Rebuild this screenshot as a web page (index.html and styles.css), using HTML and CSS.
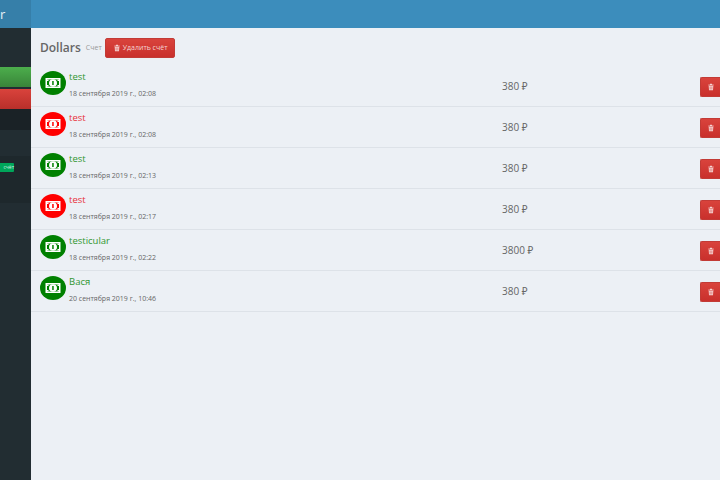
FILE: index.html
```html
<!DOCTYPE html>
<html lang="ru">
<head>
  <meta charset="UTF-8" />
  <title>Dollars</title>
  <link rel="stylesheet" href="styles.css">
</head>
<body>

  <svg class="svg-defs" width="0" height="0">
    <symbol id="bill" viewBox="0 0 26 24">
      <path fill="#fff" fill-rule="evenodd" d="M5.500 7h15v10h-15z M7 8.500v7h12v-7z"/>
      <ellipse fill="#fff" cx="13" cy="12" rx="4" ry="3.800"/>
      <path class="bill-digit" d="M12.200 10h1.500v4h-1.500z"/>
      <path fill="#fff" d="M7 8.500h1.500v1.500h-1.500z M17.500 8.500h1.500v1.500h-1.500z M7 14h1.500v1.500h-1.500z M17.500 14h1.500v1.500h-1.500z"/>
    </symbol>
    <symbol id="trash" viewBox="0 0 12 12">
      <path fill="currentColor" fill-rule="evenodd" d="M1.500 2.500h2.500l.7-1.200h2.600l.7 1.200h2.500v1h-9z M2.500 4.200h7l-.5 6.500h-6z M4.200 5.200v4.500h.8v-4.500z M7 5.200v4.500h.8v-4.500z"/>
    </symbol>
  </svg>

  <div class="layout">
    <aside class="sidebar">
      <div class="logo">r</div>
      <div class="side-group">
        <div class="side-btn side-btn-green"></div>
        <div class="side-btn side-btn-red"></div>
        <div class="side-dark"></div>
        <div class="side-item"></div>
        <div class="side-item side-item-active"><span class="side-badge">счёт</span></div>
        <div class="side-item"></div>
      </div>
    </aside>

    <div class="main">
      <header class="topbar"></header>

      <div class="page-head">
        <h1>Dollars</h1>
        <small>Счет</small>
        <button class="btn-delete">
          <svg class="icon-trash"><use href="#trash"/></svg>
          Удалить счёт
        </button>
      </div>

      <ul class="ops">
        <li class="op">
          <span class="op-icon green"><svg><use href="#bill"/></svg></span>
          <div class="op-info">
            <div class="op-name green-text">test</div>
            <div class="op-date">18 сентября 2019 г., 02:08</div>
          </div>
          <div class="op-sum">380 ₽</div>
          <button class="btn-remove"><svg class="icon-trash"><use href="#trash"/></svg></button>
        </li>
        <li class="op">
          <span class="op-icon red"><svg><use href="#bill"/></svg></span>
          <div class="op-info">
            <div class="op-name red-text">test</div>
            <div class="op-date">18 сентября 2019 г., 02:08</div>
          </div>
          <div class="op-sum">380 ₽</div>
          <button class="btn-remove"><svg class="icon-trash"><use href="#trash"/></svg></button>
        </li>
        <li class="op">
          <span class="op-icon green"><svg><use href="#bill"/></svg></span>
          <div class="op-info">
            <div class="op-name green-text">test</div>
            <div class="op-date">18 сентября 2019 г., 02:13</div>
          </div>
          <div class="op-sum">380 ₽</div>
          <button class="btn-remove"><svg class="icon-trash"><use href="#trash"/></svg></button>
        </li>
        <li class="op">
          <span class="op-icon red"><svg><use href="#bill"/></svg></span>
          <div class="op-info">
            <div class="op-name red-text">test</div>
            <div class="op-date">18 сентября 2019 г., 02:17</div>
          </div>
          <div class="op-sum">380 ₽</div>
          <button class="btn-remove"><svg class="icon-trash"><use href="#trash"/></svg></button>
        </li>
        <li class="op">
          <span class="op-icon green"><svg><use href="#bill"/></svg></span>
          <div class="op-info">
            <div class="op-name green-text">testicular</div>
            <div class="op-date">18 сентября 2019 г., 02:22</div>
          </div>
          <div class="op-sum">3800 ₽</div>
          <button class="btn-remove"><svg class="icon-trash"><use href="#trash"/></svg></button>
        </li>
        <li class="op">
          <span class="op-icon green"><svg><use href="#bill"/></svg></span>
          <div class="op-info">
            <div class="op-name green-text">Вася</div>
            <div class="op-date">20 сентября 2019 г., 10:46</div>
          </div>
          <div class="op-sum">380 ₽</div>
          <button class="btn-remove"><svg class="icon-trash"><use href="#trash"/></svg></button>
        </li>
      </ul>
    </div>
  </div>

</body>
</html>
```

FILE: styles.css
```css
html, body {
  height: 100%;
}

body {
  margin: 0;
  overflow: hidden;
  font-family: "Open Sans", "Noto Sans", sans-serif;
  background-color: #ecf0f5;
  color: #444;
}

.svg-defs {
  display: block;
  height: 0;
}

.layout {
  display: flex;
  height: 480px;
  width: 720px;
}

/* sidebar */
.sidebar {
  width: 31px;
  flex-shrink: 0;
  background-color: #222d32;
  overflow: hidden;
}

.logo {
  height: 28px;
  background-color: #367fa9;
  color: #e6f0f6;
  font-size: 13px;
  line-height: 28px;
}

.side-group {
  padding-top: 39px;
}

.side-btn {
  height: 20px;
}

.side-btn-green {
  margin-bottom: 2px;
  background: linear-gradient(#4cae4c, #398439);
}

.side-btn-red {
  background: linear-gradient(#d9433c, #b92f2a);
}

.side-dark {
  height: 21px;
  background-color: #1a2226;
}

.side-item {
  height: 26px;
}

.side-item-active {
  height: 47px;
  padding-top: 7px;
  box-sizing: border-box;
  background-color: #1e282c;
}

.side-badge {
  display: block;
  width: 14px;
  height: 9px;
  background-color: #00a65a;
  color: #d5f0e2;
  font-size: 5px;
  line-height: 9px;
  text-align: right;
  border-radius: 0 1px 1px 0;
}

/* main */
.main {
  flex: 1;
  min-width: 0;
  overflow: hidden;
}

.topbar {
  height: 28px;
  background-color: #3c8dbc;
}

.page-head {
  display: flex;
  align-items: center;
  height: 38px;
  padding-left: 9px;
}

.page-head h1 {
  margin: 0;
  font-size: 12px;
  font-weight: 600;
  color: #666;
}

.page-head small {
  margin-left: 5px;
  font-size: 7px;
  color: #999;
}

.btn-delete {
  display: flex;
  align-items: center;
  gap: 2px;
  margin-left: 3px;
  margin-top: 1px;
  height: 20px;
  padding: 0 7px;
  border: 1px solid #c23b36;
  border-radius: 2px;
  background: linear-gradient(#d9433c, #c9302c);
  color: #f5d5d4;
  font-family: inherit;
  font-size: 7px;
}

.btn-delete .icon-trash {
  width: 8px;
  height: 8px;
}

.ops {
  list-style: none;
  margin: 0;
  padding: 0;
}

.op {
  display: flex;
  align-items: flex-start;
  height: 41px;
  border-bottom: 1px solid #dde2e8;
  padding-left: 9px;
  box-sizing: border-box;
}

.op-icon {
  width: 26px;
  height: 24px;
  margin-top: 5px;
  border-radius: 50%;
  flex-shrink: 0;
}

.op-icon svg {
  display: block;
  width: 26px;
  height: 24px;
}

.op-icon.green {
  background-color: #008000;
  color: #008000;
}

.op-icon.red {
  background-color: #f00;
  color: #f00;
}

.bill-digit {
  fill: currentColor;
}

.op-info {
  width: 433px;
  margin-left: 3px;
  flex-shrink: 0;
}

.op-name {
  font-size: 9.500px;
  line-height: 12px;
  margin-top: 5px;
}

.green-text {
  color: #2f962f;
}

.red-text {
  color: #e8303a;
}

.op-date {
  font-size: 7px;
  line-height: 10px;
  margin-top: 6px;
  color: #666;
}

.op-sum {
  width: 198px;
  flex-shrink: 0;
  font-size: 10px;
  line-height: 14px;
  margin-top: 13px;
  color: #666;
}

.btn-remove {
  display: flex;
  align-items: center;
  justify-content: center;
  width: 20px;
  height: 20px;
  margin-top: 11px;
  padding: 0;
  border: 1px solid #c23b36;
  border-right: none;
  border-radius: 2px 0 0 2px;
  background: linear-gradient(#d9433c, #c9302c);
  color: #f5d5d4;
  flex-shrink: 0;
}

.btn-remove .icon-trash {
  width: 8px;
  height: 8px;
}
```
